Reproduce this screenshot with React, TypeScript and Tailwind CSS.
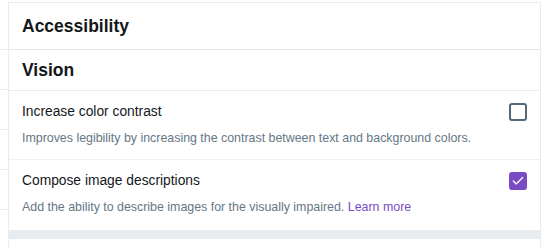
import { Check } from "lucide-react";

const font = { fontFamily: '"Liberation Sans", Arial, sans-serif' };

function Box({ checked }: { checked?: boolean }) {
  return checked ? (
    <span className="flex h-[18px] w-[18px] items-center justify-center rounded-[3px] bg-[#794bc4]">
      <Check size={14} strokeWidth={2.25} className="text-white" />
    </span>
  ) : (
    <span className="block h-[18px] w-[18px] rounded-[3px] border-2 border-[#55687a]" />
  );
}

function Row({
  title,
  children,
  checked,
  border,
}: {
  title: string;
  children: React.ReactNode;
  checked?: boolean;
  border?: boolean;
}) {
  return (
    <div className={`flex items-start px-[13px] ${border ? "h-[69px] border-b border-[#eef1f4]" : "h-[70px]"}`}>
      <div className="flex-1 min-w-0">
        <div className="mt-[12px] text-[13.8px] leading-[18px] text-[#14171a]">{title}</div>
        <div className="mt-[9px] text-[12.4px] leading-[16px] text-[#657786]">{children}</div>
      </div>
      <div className="mt-[12px]">
        <Box checked={checked} />
      </div>
    </div>
  );
}

export default function App() {
  return (
    <div className="flex h-[247px] w-[550px] overflow-hidden bg-white" style={font}>
      {/* neighbour column edge */}
      <div className="w-[8px] shrink-0 pt-[10px]">
        {[0, 1, 2, 3, 4].map((i) => (
          <div key={i} className="h-[40px] border-b border-[#e6ecf0]" />
        ))}
      </div>

      <div className="mt-[2px] w-[533px] shrink-0 border-x border-t border-[#e6ecf0]">
        <div className="flex h-[47px] items-center border-b border-[#e1e8ed] px-[13px]">
          <h2 className="text-[17.5px] font-bold text-[#14171a]">Accessibility</h2>
        </div>
        <div className="flex h-[41px] items-center border-b border-[#e6ecf0] px-[13px]">
          <h3 className="text-[17.5px] font-bold text-[#14171a]">Vision</h3>
        </div>

        <Row title="Increase color contrast" border>
          Improves legibility by increasing the contrast between text and background colors.
        </Row>
        <Row title="Compose image descriptions" checked>
          Add the ability to describe images for the visually impaired.{" "}
          <span className="text-[#794bc4]">Learn more</span>
        </Row>

        <div className="h-[9px] bg-[#e6ecf0]" />
      </div>
    </div>
  );
}
